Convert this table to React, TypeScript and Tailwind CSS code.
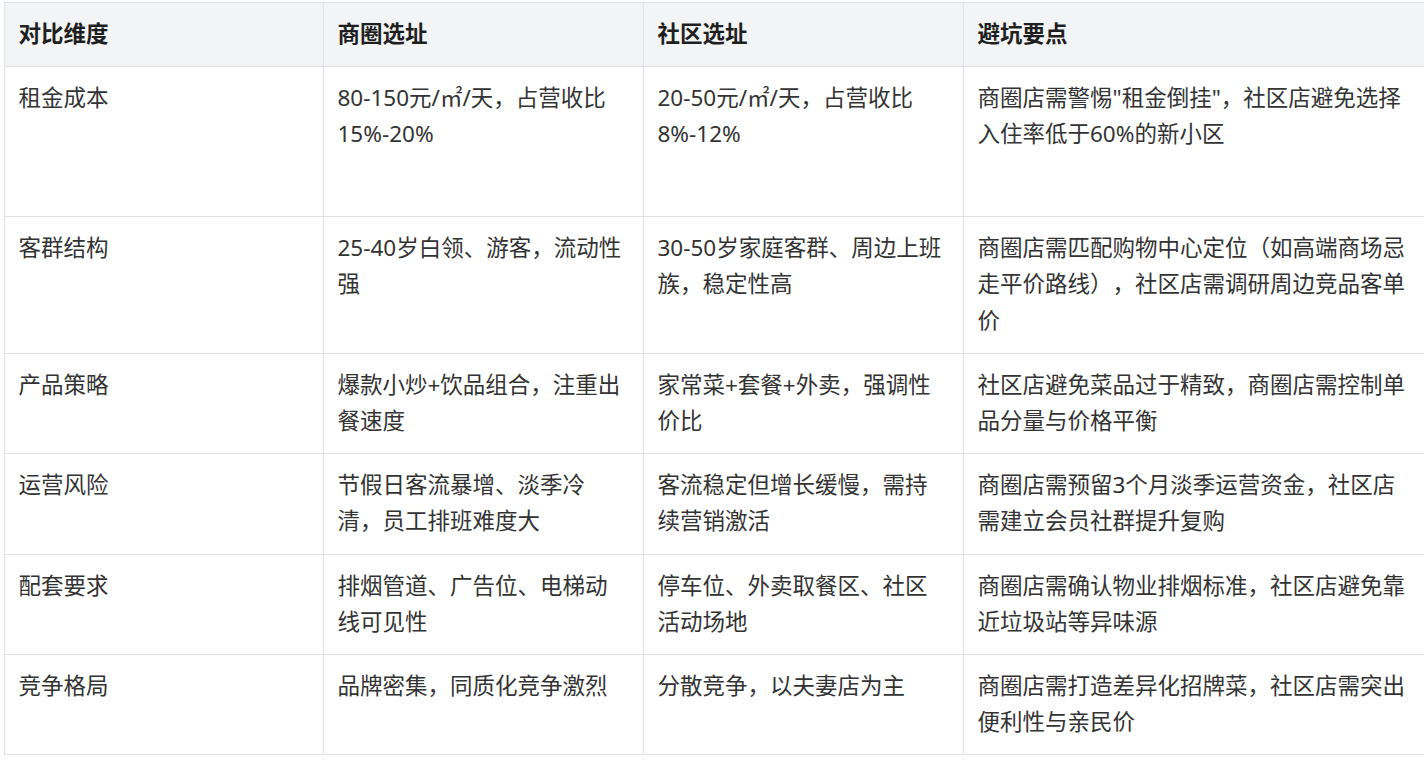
import React from 'react';

type Row = {
  dim: string;
  mall: string;
  community: string;
  tips: string;
  height: string;
};

const rows: Row[] = [
  {
    dim: '租金成本',
    mall: '80-150元/㎡/天，占营收比15%-20%',
    community: '20-50元/㎡/天，占营收比8%-12%',
    tips: '商圈店需警惕"租金倒挂"，社区店避免选择入住率低于60%的新小区',
    height: 'h-[150px]',
  },
  {
    dim: '客群结构',
    mall: '25-40岁白领、游客，流动性强',
    community: '30-50岁家庭客群、周边上班族，稳定性高',
    tips: '商圈店需匹配购物中心定位（如高端商场忌走平价路线），社区店需调研周边竞品客单价',
    height: 'h-[137px]',
  },
  {
    dim: '产品策略',
    mall: '爆款小炒+饮品组合，注重出餐速度',
    community: '家常菜+套餐+外卖，强调性价比',
    tips: '社区店避免菜品过于精致，商圈店需控制单品分量与价格平衡',
    height: 'h-[100px]',
  },
  {
    dim: '运营风险',
    mall: '节假日客流暴增、淡季冷清，员工排班难度大',
    community: '客流稳定但增长缓慢，需持续营销激活',
    tips: '商圈店需预留3个月淡季运营资金，社区店需建立会员社群提升复购',
    height: 'h-[101px]',
  },
  {
    dim: '配套要求',
    mall: '排烟管道、广告位、电梯动线可见性',
    community: '停车位、外卖取餐区、社区活动场地',
    tips: '商圈店需确认物业排烟标准，社区店避免靠近垃圾站等异味源',
    height: 'h-[100px]',
  },
  {
    dim: '竞争格局',
    mall: '品牌密集，同质化竞争激烈',
    community: '分散竞争，以夫妻店为主',
    tips: '商圈店需打造差异化招牌菜，社区店需突出便利性与亲民价',
    height: 'h-[100px]',
  },
];

// shared cell look, top-aligned text like the original table
const cell = 'border border-[#dfe1e5] px-[13.5px] py-[13px] align-top text-left';

export default function App() {
  return (
    <div className="w-[1424px] h-[760px] overflow-hidden bg-white pl-[4px] pt-[2px]">
      <table
        className="table-fixed border-collapse w-[1424px] text-[22.5px] leading-[36.5px] text-[#333333] [text-spacing-trim:space-all]"
        style={{ fontFamily: '"Noto Sans", "Noto Sans CJK SC", sans-serif' }}
      >
        <colgroup>
          <col className="w-[319px]" />
          <col className="w-[320px]" />
          <col className="w-[320px]" />
          <col className="w-[465px]" />
        </colgroup>
        <thead>
          <tr className="h-[63px] bg-[#f3f4f6]">
            <th className={`${cell} font-bold text-[#1f1f1f]`}>对比维度</th>
            <th className={`${cell} font-bold text-[#1f1f1f]`}>商圈选址</th>
            <th className={`${cell} font-bold text-[#1f1f1f]`}>社区选址</th>
            <th className={`${cell} font-bold text-[#1f1f1f]`}>避坑要点</th>
          </tr>
        </thead>
        <tbody>
          {rows.map(r => (
            <tr key={r.dim} className={r.height}>
              <td className={cell}>{r.dim}</td>
              <td className={cell}>{r.mall}</td>
              <td className={cell}>{r.community}</td>
              <td className={cell}>{r.tips}</td>
            </tr>
          ))}
        </tbody>
      </table>
    </div>
  );
}
